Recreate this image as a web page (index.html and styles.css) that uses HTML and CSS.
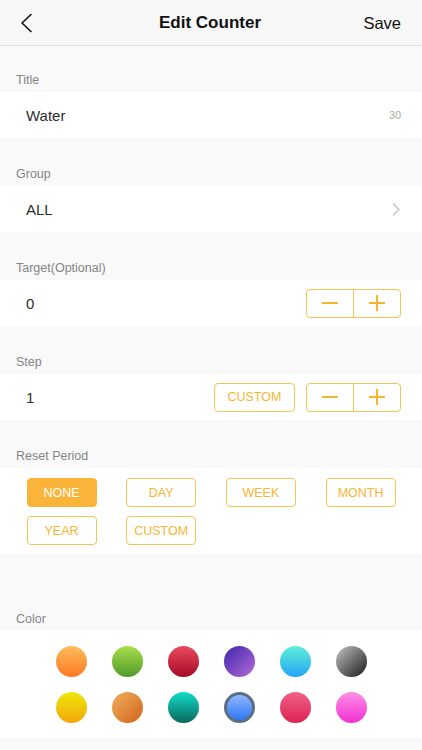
FILE: index.html
```html
<!DOCTYPE html>
<html>
<head>
<meta charset="utf-8">
<link rel="stylesheet" href="styles.css">
</head>
<body>
<header class="nav">
  <span class="nav-back">
    <svg width="14" height="20" viewBox="0 0 14 20"><path d="M12 1.5 L3 10 L12 18.5" fill="none" stroke="#111" stroke-width="1.6" stroke-linecap="round" stroke-linejoin="round"/></svg>
  </span>
  <h1 class="nav-title">Edit Counter</h1>
  <span class="nav-save">Save</span>
</header>

<div class="label first">Title</div>
<div class="row">
  <span class="value">Water</span>
  <span class="count">30</span>
</div>

<div class="label">Group</div>
<div class="row">
  <span class="value">ALL</span>
  <svg class="chev" width="9" height="13" viewBox="0 0 9 13"><path d="M1.5 1 L7 6.5 L1.5 12" fill="none" stroke="#c4c4c8" stroke-width="1.5" stroke-linecap="round" stroke-linejoin="round"/></svg>
</div>

<div class="label">Target(Optional)</div>
<div class="row">
  <span class="value">0</span>
  <div class="stepper">
    <span class="step-btn"><span class="minus"></span></span>
    <span class="step-btn"><span class="plus"></span></span>
  </div>
</div>

<div class="label">Step</div>
<div class="row">
  <span class="value">1</span>
  <div class="controls">
    <span class="obtn custom-step">CUSTOM</span>
    <div class="stepper">
      <span class="step-btn"><span class="minus"></span></span>
      <span class="step-btn"><span class="plus"></span></span>
    </div>
  </div>
</div>

<div class="label">Reset Period</div>
<div class="period">
  <span class="obtn active">NONE</span>
  <span class="obtn">DAY</span>
  <span class="obtn">WEEK</span>
  <span class="obtn">MONTH</span>
  <span class="obtn">YEAR</span>
  <span class="obtn">CUSTOM</span>
</div>

<div class="label tall">Color</div>
<div class="colors">
  <span class="dot c1"></span>
  <span class="dot c2"></span>
  <span class="dot c3"></span>
  <span class="dot c4"></span>
  <span class="dot c5"></span>
  <span class="dot c6"></span>
  <span class="dot c7"></span>
  <span class="dot c8"></span>
  <span class="dot c9"></span>
  <span class="dot c10 selected"></span>
  <span class="dot c11"></span>
  <span class="dot c12"></span>
</div>
</body>
</html>
```

FILE: styles.css
```css
* { box-sizing: border-box; }
html, body { margin: 0; padding: 0; }
body {
  background: #f9f9f9;
  font-family: "Liberation Sans", Arial, sans-serif;
  color: #222;
  width: 422px;
  min-height: 750px;
}
.nav {
  height: 46px;
  background: #f7f7f7;
  border-bottom: 1px solid #dedede;
  display: flex;
  align-items: center;
  justify-content: space-between;
  padding: 1px 21px 0 19px;
}
.nav-back { display: flex; width: 40px; }
.nav-title {
  margin: 0;
  font-size: 17px;
  font-weight: bold;
  color: #111;
}
.nav-save {
  width: 40px;
  text-align: right;
  font-size: 16.5px;
  color: #111;
}
.label {
  height: 48px;
  display: flex;
  align-items: flex-end;
  padding: 0 0 4px 16px;
  font-size: 12.5px;
  line-height: 16px;
  color: #858585;
}
.label.first { height: 46px; }
.label.tall { height: 77px; padding-bottom: 4px; }
.row {
  height: 46px;
  background: #fff;
  display: flex;
  align-items: center;
  justify-content: space-between;
  padding: 0 21px 0 26px;
}
.value { font-size: 15px; color: #2e2e2e; }
.count { font-size: 10.5px; color: #a8a8a8; }
.controls { display: flex; gap: 11px; align-items: center; }
.stepper {
  width: 95px;
  height: 29px;
  border: 1px solid #f8c453;
  border-radius: 4px;
  display: flex;
}
.step-btn {
  flex: 1;
  display: flex;
  align-items: center;
  justify-content: center;
}
.step-btn + .step-btn { border-left: 1px solid #f8c453; }
.minus, .plus {
  display: block;
  width: 16px;
  height: 1.6px;
  background: #f7b532;
  position: relative;
}
.plus::after {
  content: "";
  position: absolute;
  left: 7.2px;
  top: -7.2px;
  width: 1.6px;
  height: 16px;
  background: #f7b532;
}
.obtn {
  height: 29px;
  display: flex;
  align-items: center;
  justify-content: center;
  border: 1px solid #f8c453;
  border-radius: 4px;
  font-size: 12.5px;
  color: #f7b532;
  background: #fff;
}
.custom-step { width: 81px; }
.obtn.active { background: #fbb43a; border-color: #fbb43a; color: #fff; }
.period {
  background: #fff;
  display: grid;
  grid-template-columns: repeat(4, 70px);
  column-gap: 29.7px;
  row-gap: 9px;
  padding: 10px 0 9px 26.5px;
}
.colors {
  background: #fff;
  display: grid;
  grid-template-columns: repeat(6, 31px);
  justify-content: center;
  column-gap: 25px;
  row-gap: 15px;
  padding: 15px 0;
}
.dot { width: 31px; height: 31px; border-radius: 50%; display: block; }
.c1 { background: linear-gradient(180deg, #fdbe5c, #fb7923); }
.c2 { background: linear-gradient(180deg, #a8de4c, #4f9a28); }
.c3 { background: linear-gradient(180deg, #e84a5d, #a60b28); }
.c4 { background: linear-gradient(135deg, #3f26ad, #b56bd8); }
.c5 { background: linear-gradient(180deg, #5ff0d6, #23a5f7); }
.c6 { background: linear-gradient(135deg, #c4c4c4, #1a1a1a); }
.c7 { background: linear-gradient(180deg, #ede80a, #f2a70a); }
.c8 { background: linear-gradient(135deg, #f0b060, #d2631a); }
.c9 { background: linear-gradient(180deg, #10dccb, #0c675c); }
.c10 { background: linear-gradient(180deg, #8fb6ff, #2c78f4); }
.c10.selected { border: 3px solid #5d6e84; }
.c11 { background: linear-gradient(180deg, #ef6288, #dd2352); }
.c12 { background: linear-gradient(180deg, #ff8fe6, #f131d4); }
```
